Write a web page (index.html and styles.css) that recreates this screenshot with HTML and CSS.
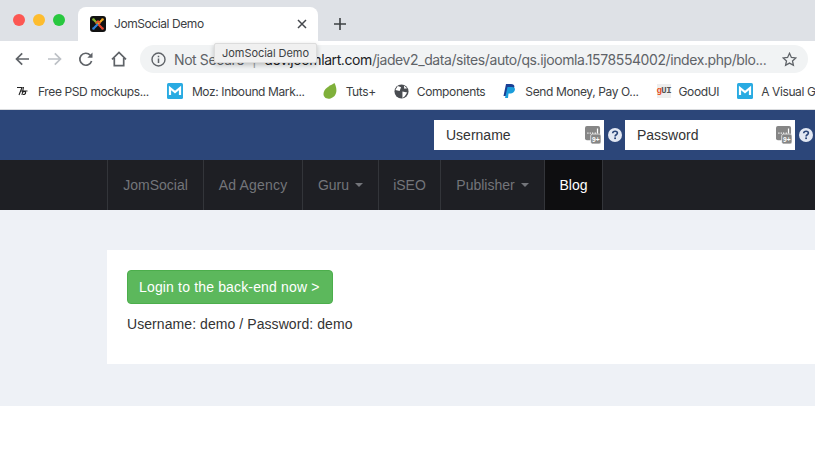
FILE: index.html
```html
<!DOCTYPE html>
<html lang="en">
<head>
<meta charset="utf-8">
<title>JomSocial Demo</title>
<link rel="stylesheet" href="styles.css">
</head>
<body>
<div class="chrome">
  <div class="tabstrip">
    <div class="lights"><i class="light red"></i><i class="light amber"></i><i class="light green"></i></div>
    <div class="tab">
      <svg class="favicon" width="16" height="16" viewBox="0 0 16 16"><rect width="16" height="16" rx="3" fill="#111"/><path d="M4.500 4.500L7.500 7.500" stroke="#86b82e" stroke-width="2.200" stroke-linecap="round"/><path d="M11.500 4.500L8.800 7.200" stroke="#f0a91f" stroke-width="2.200" stroke-linecap="round"/><path d="M11.500 11.500L8.800 8.800" stroke="#e8452c" stroke-width="2.200" stroke-linecap="round"/><path d="M4.500 11.500L7.200 8.800" stroke="#2f80d8" stroke-width="2.200" stroke-linecap="round"/><path d="M5.500 7.500L8 5l2.500 2.500" fill="none" stroke="#e8452c" stroke-width="1.400"/><circle cx="3.500" cy="3.500" r="1.300" fill="#86b82e"/><circle cx="12.500" cy="3.500" r="1.300" fill="#f0a91f"/><circle cx="3.500" cy="12.500" r="1.300" fill="#2f80d8"/><circle cx="12.500" cy="12.500" r="1.300" fill="#e8452c"/></svg>
      <span class="tab-title">JomSocial Demo</span>
      <svg class="tab-close" width="10" height="10" viewBox="0 0 10 10"><path d="M1 1l8 8M9 1l-8 8" stroke="#45484d" stroke-width="1.500"/></svg>
    </div>
    <svg class="newtab" width="12" height="12" viewBox="0 0 12 12"><path d="M6 0v12M0 6h12" stroke="#3c4043" stroke-width="1.600"/></svg>
  </div>
  <div class="toolbar">
    <svg class="tool" width="16" height="16" viewBox="0 0 16 16"><path d="M15 8H2.500M8.200 2.300L2.500 8l5.700 5.700" fill="none" stroke="#5f6368" stroke-width="1.700"/></svg>
    <svg class="tool" width="16" height="16" viewBox="0 0 16 16"><path d="M1 8h12.500M7.800 2.300L13.500 8l-5.700 5.700" fill="none" stroke="#bdc1c6" stroke-width="1.700"/></svg>
    <svg class="tool" width="16" height="16" viewBox="0 0 16 16"><path d="M13.600 10A6 6 0 1 1 12.300 4.200" fill="none" stroke="#5f6368" stroke-width="1.700"/><path d="M14.500 1.500v5.200H9.300z" fill="#5f6368"/></svg>
    <svg class="tool" width="18" height="18" viewBox="0 0 18 18"><path d="M2 9.300L9 2.500l7 6.800M4.300 8v7.700h9.400V8" fill="none" stroke="#5f6368" stroke-width="1.700"/></svg>
    <div class="omnibox">
      <svg class="info" width="15" height="15" viewBox="0 0 15 15"><circle cx="7.500" cy="7.500" r="6.500" fill="none" stroke="#5f6368" stroke-width="1.400"/><path d="M7.500 6.500v4.500M7.500 3.800v1.500" stroke="#5f6368" stroke-width="1.500"/></svg>
      <span class="url"><span class="muted">Not Secure</span><span class="sep">|</span><span class="host">dev.joomlart.com</span><span class="muted">/jadev2_data/sites/auto/qs.ijoomla.1578554002/index.php/blo...</span></span>
      <svg class="star" width="15" height="15" viewBox="0 0 15 15"><path d="M7.500 1.300l1.900 4.100 4.400.5-3.300 3 .9 4.400-3.900-2.200-3.900 2.200.9-4.400-3.300-3 4.400-.5z" fill="none" stroke="#5f6368" stroke-width="1.300"/></svg>
    </div>
  </div>
  <div class="bookmarks">
    <div class="bm first"><svg width="12" height="10" viewBox="0 0 12 10"><path d="M1 1.500h5L3 9M4.500 5h7M7.500 1L6 9M7 6c3.500-2 3.500 3 0 2.500" fill="none" stroke="#222" stroke-width="1.100"/></svg><span>Free PSD mockups...</span></div>
    <div class="bm moz"><svg width="16" height="16" viewBox="0 0 16 16"><rect width="16" height="16" rx="1.500" fill="#29abe2"/><path d="M3 12V5l5 4 5-4v7" fill="none" stroke="#fff" stroke-width="2.200"/></svg><span>Moz: Inbound Mark...</span></div>
    <div class="bm"><svg width="15" height="16" viewBox="0 0 15 16"><path d="M.5 11C.5 6 6 3 11.500 0c3 6 3 13-4 15.500C3 16.500.5 14 .5 11z" fill="#7fb03a"/></svg><span>Tuts+</span></div>
    <div class="bm"><svg width="15" height="15" viewBox="0 0 16 16"><circle cx="8" cy="8" r="7.500" fill="#4a4d52"/><path d="M4 2l3.500 1.500-1.500 4-4.500-1zM9 8l5 1-2.500 4L9 15zM10.500 1.500L14 4.500l-3 .5z" fill="#fff"/></svg><span>Components</span></div>
    <div class="bm"><svg width="14" height="16" viewBox="0 0 14 16"><path d="M3 1h5c3 0 4 2 3 4-1 2.500-3 3-5 3H4.500L3.500 13H.5z" fill="#1b3f94"/><path d="M4.500 4H9c3 0 3.500 2 2.500 4-1 2-3 2.500-5 2.500h-1L5 15H2z" fill="#1a9ddb"/></svg><span>Send Money, Pay O...</span></div>
    <div class="bm"><span class="gui"><b>g</b>UI</span><span>GoodUI</span></div>
    <div class="bm"><svg width="16" height="16" viewBox="0 0 16 16"><rect width="16" height="16" rx="1.500" fill="#29abe2"/><path d="M3 12V5l5 4 5-4v7" fill="none" stroke="#fff" stroke-width="2.200"/></svg><span class="clip">A Visual G</span></div>
  </div>
</div>
<div class="tooltip">JomSocial Demo</div>
<header class="site-top">
  <div class="field"><span>Username</span><svg class="kp" width="16" height="18" viewBox="0 0 17 19"><rect width="16" height="15" rx="2" fill="#868686"/><rect x="6" y="8.500" width="11" height="10.500" rx="2" fill="#868686" stroke="#fff" stroke-width=".7"/><path d="M2.500 7.500h1.200M5 7.500h1.200M7.500 7.500h1.200M10.300 7.500h1.200M13.300 2.500v5.500" stroke="#fff" stroke-width="1.300"/><text class="kp-badge" x="11.500" y="16.500" text-anchor="middle">9+</text></svg></div>
  <svg class="help" width="14" height="14" viewBox="0 0 14 14"><circle cx="7" cy="7" r="7" fill="#e3e8f3"/><path d="M4.700 5.300C4.800 3.900 5.800 3.200 7.100 3.200c1.400 0 2.300.8 2.300 1.900 0 1.700-2.300 1.600-2.300 3.300" fill="none" stroke="#2c4679" stroke-width="1.600"/><rect x="6.200" y="9.400" width="1.800" height="1.700" fill="#2c4679"/></svg>
  <div class="field"><span>Password</span><svg class="kp" width="16" height="18" viewBox="0 0 17 19"><rect width="16" height="15" rx="2" fill="#868686"/><rect x="6" y="8.500" width="11" height="10.500" rx="2" fill="#868686" stroke="#fff" stroke-width=".7"/><path d="M2.500 7.500h1.200M5 7.500h1.200M7.500 7.500h1.200M10.300 7.500h1.200M13.300 2.500v5.500" stroke="#fff" stroke-width="1.300"/><text class="kp-badge" x="11.500" y="16.500" text-anchor="middle">9+</text></svg></div>
  <svg class="help" width="14" height="14" viewBox="0 0 14 14"><circle cx="7" cy="7" r="7" fill="#e3e8f3"/><path d="M4.700 5.300C4.800 3.900 5.800 3.200 7.100 3.200c1.400 0 2.300.8 2.300 1.900 0 1.700-2.300 1.600-2.300 3.300" fill="none" stroke="#2c4679" stroke-width="1.600"/><rect x="6.200" y="9.400" width="1.800" height="1.700" fill="#2c4679"/></svg>
</header>
<nav class="site-nav">
  <a class="nav-item">JomSocial</a>
  <a class="nav-item wide">Ad Agency</a>
  <a class="nav-item">Guru<i class="caret"></i></a>
  <a class="nav-item">iSEO</a>
  <a class="nav-item">Publisher<i class="caret"></i></a>
  <a class="nav-item active">Blog</a>
</nav>
<main class="page">
  <section class="card">
    <a class="btn">Login to the back-end now &gt;</a>
    <p class="creds">Username: demo / Password: demo</p>
  </section>
</main>
</body>
</html>
```
FILE: styles.css
```css
* { box-sizing: border-box; }
html, body { margin: 0; padding: 0; }
body { width: 815px; height: 462px; overflow: hidden; background: #fff; position: relative; font-family: "Liberation Sans", Arial, sans-serif; font-size: 14px; color: #333; }

.chrome { font-family: Inter, "Liberation Sans", sans-serif; color: #3c4043; }
.tabstrip { height: 41px; background: #dee1e6; display: flex; align-items: flex-end; }
.lights { width: 78px; height: 41px; padding: 14px 0 0 13px; display: flex; gap: 8px; }
.light { width: 12px; height: 12px; border-radius: 50%; }
.red { background: #fc5753; }
.amber { background: #fdbc2e; }
.green { background: #28c83f; }
.tab { width: 240px; height: 34px; background: #fff; border-radius: 8px 8px 0 0; display: flex; align-items: center; padding: 0 11px 0 12px; }
.favicon { flex: none; }
.tab-title { margin-left: 8px; flex: 1; font-size: 12px; line-height: 16px; letter-spacing: -.42px; color: #3c4043; }
.tab-close { flex: none; }
.newtab { margin: 0 0 11px 16px; }

.toolbar { height: 36px; background: #fff; display: flex; align-items: center; padding: 0 7px 0 14px; }
.tool { flex: none; margin-right: 16px; }
.tool:nth-child(2) { margin-left: 1px; margin-right: 15px; }
.tool:nth-child(4) { margin-right: 12px; }
.omnibox { flex: 1; height: 28px; border-radius: 14px; background: #f1f3f4; display: flex; align-items: center; padding: 0 11px; min-width: 0; }
.info { flex: none; }
.url { flex: 1; margin-left: 8px; font-size: 14px; white-space: nowrap; overflow: hidden; letter-spacing: -.41px; }
.muted { color: #5f6368; }
.host { color: #202124; }
.sep { color: #9aa0a6; margin: 0 8px; }
.star { flex: none; }

.bookmarks { height: 33px; padding: 0 0 4px 16px; display: flex; align-items: center; gap: 18px; white-space: nowrap; overflow: hidden; border-bottom: 1px solid #d9dbde; font-size: 12px; letter-spacing: -.38px; color: #3c4043; }
.bm { display: flex; align-items: center; gap: 8px; flex: none; }
.bm.first { gap: 10px; }
.bm.moz { gap: 9px; }
.gui { width: 14px; height: 14px; background: #eee; font: bold 9px/14px "Liberation Mono", monospace; color: #555; letter-spacing: -.6px; text-align: center; }
.gui b { color: #e8501f; }

.tooltip { position: absolute; left: 214px; top: 43px; width: 103px; height: 20px; background: #f0f0f0; border: 1px solid #dcdcdc; border-radius: 2px; box-shadow: 0 2px 5px rgba(0,0,0,.22); font: 11px/18px Inter, "Liberation Sans", sans-serif; letter-spacing: -.05px; color: #3c4043; text-align: center; white-space: nowrap; }

.site-top { height: 50px; background: #2c4679; display: flex; align-items: center; justify-content: flex-end; padding-right: 2px; }
.field { width: 170px; height: 30px; background: #fff; display: flex; align-items: center; justify-content: space-between; padding: 0 3px 0 12px; color: #333; font-size: 14px; }
.kp { align-self: flex-start; margin-top: 6px; }
.kp-badge { font: bold 7px "Liberation Sans", sans-serif; fill: #fff; }
.help { margin: 0 3px 0 4px; flex: none; }
.help:last-child { margin-right: 0; }

.site-nav { height: 50px; background: #1e1f24; padding-left: 107px; display: grid; grid-template-columns: 96px 99px 76px 62px 104px 59px; }
.nav-item { display: flex; align-items: center; justify-content: center; border-left: 1px solid #33353a; color: #73757a; font-size: 14px; }
.nav-item.wide { letter-spacing: .2px; }
.nav-item.active { background: #0e0e10; color: #fff; border-right: 1px solid #33353a; }
.caret { width: 0; height: 0; margin-left: 6px; border-left: 4px solid transparent; border-right: 4px solid transparent; border-top: 4px solid #73757a; }

.page { height: 196px; background: #eef1f6; padding: 40px 0 42px 107px; }
.card { height: 114px; background: #fff; padding: 20px; }
.btn { display: inline-block; height: 34px; padding: 0 12px 0 11px; background: #5cb85c; border: 1px solid #4cae4c; border-radius: 4px; color: #fff; font-size: 14px; line-height: 32px; letter-spacing: .16px; }
.creds { margin: 10px 0 0; line-height: 20px; color: #333; letter-spacing: .07px; }
```
